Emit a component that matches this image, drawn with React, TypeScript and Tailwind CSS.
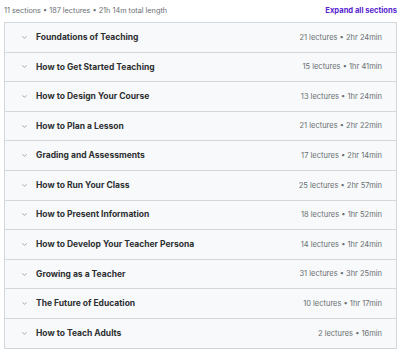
import { ChevronDown } from "lucide-react";

interface Section {
  title: string;
  meta: string;
}

const sections: Section[] = [
  { title: "Foundations of Teaching", meta: "21 lectures • 2hr 24min" },
  { title: "How to Get Started Teaching", meta: "15 lectures • 1hr 41min" },
  { title: "How to Design Your Course", meta: "13 lectures • 1hr 24min" },
  { title: "How to Plan a Lesson", meta: "21 lectures • 2hr 22min" },
  { title: "Grading and Assessments", meta: "17 lectures • 2hr 14min" },
  { title: "How to Run Your Class", meta: "25 lectures • 2hr 57min" },
  { title: "How to Present Information", meta: "18 lectures • 1hr 52min" },
  { title: "How to Develop Your Teacher Persona", meta: "14 lectures • 1hr 24min" },
  { title: "Growing as a Teacher", meta: "31 lectures • 3hr 25min" },
  { title: "The Future of Education", meta: "10 lectures • 1hr 17min" },
  { title: "How to Teach Adults", meta: "2 lectures • 16min" },
];

export default function App() {
  return (
    <div className="w-[400px] h-[350px] bg-white pl-[4px] pr-[3px] overflow-hidden font-['Inter',sans-serif] text-[#2d2f31]">
      <div className="flex items-center justify-between h-[22px]">
        <span className="text-[7.3px] text-[#6a6f73]">11 sections • 187 lectures • 21h 14m total length</span>
        <span className="text-[7.6px] font-bold text-[#5624d0]">Expand all sections</span>
      </div>
      <div className="border border-[#d1d7dc] border-b-0">
        {sections.map((s) => (
          <div
            key={s.title}
            className="flex items-center justify-between h-[29.6px] bg-[#f7f9fa] border-b border-[#d1d7dc] pl-[16px] pr-[14px]"
          >
            <div className="flex items-center">
              <ChevronDown className="w-[7px] h-[7px] text-[#6a6f73] mr-[8px]" strokeWidth={2} />
              <span className="text-[8.5px] font-bold">{s.title}</span>
            </div>
            <span className="text-[7.5px] text-[#6a6f73]">{s.meta}</span>
          </div>
        ))}
      </div>
    </div>
  );
}
